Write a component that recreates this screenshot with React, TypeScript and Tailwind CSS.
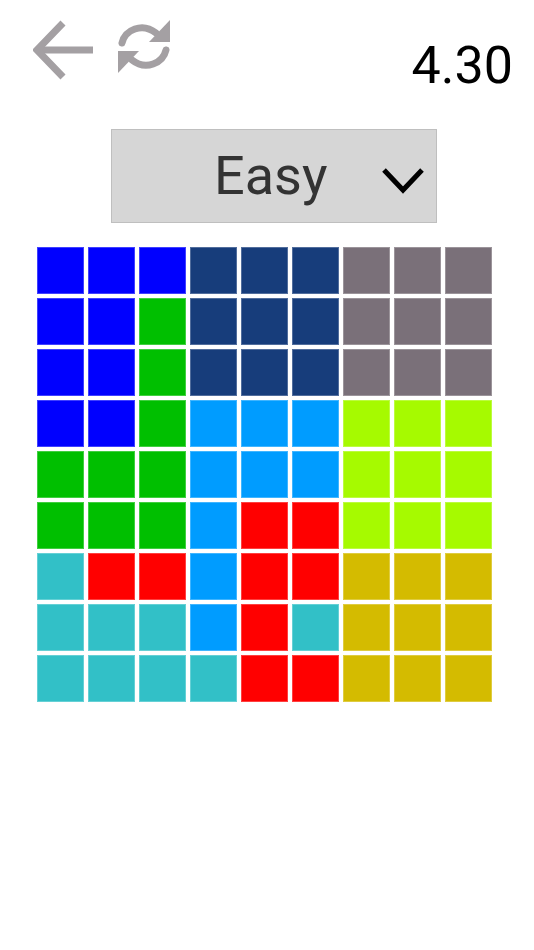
import React from 'react'

const colors: Record<string, string> = {
  B: 'bg-[#0000ff]',
  N: 'bg-[#173d7b]',
  G: 'bg-[#7a7079]',
  E: 'bg-[#00bf00]',
  L: 'bg-[#009cff]',
  Y: 'bg-[#a6fa00]',
  R: 'bg-[#ff0000]',
  C: 'bg-[#32c0c7]',
  O: 'bg-[#d4bb00]',
}

// board layout, one string per row
const board = [
  'BBBNNNGGG',
  'BBENNNGGG',
  'BBENNNGGG',
  'BBELLLYYY',
  'EEELLLYYY',
  'EEELRRYYY',
  'CRRLRROOO',
  'CCCLRCOOO',
  'CCCCRROOO',
]

const BackArrow = () => (
  <svg viewBox="0 0 60 62" className="w-[60px] h-[62px]" fill="none" stroke="#a4a0a3" strokeWidth="7">
    <path d="M60 31 H5" />
    <path d="M30 4 L4 31 L30 58" strokeLinejoin="miter" />
  </svg>
)

const RefreshIcon = () => (
  <svg viewBox="0 0 52 53" className="w-[52px] h-[53px]" fill="#a4a0a3">
    <path d="M4 23 C7 10 24 2 38 13" fill="none" stroke="#a4a0a3" strokeWidth="7" strokeLinecap="round" />
    <path d="M52 0 L52 22 L31 22 Z" />
    <path d="M48 30 C45 43 28 51 14 40" fill="none" stroke="#a4a0a3" strokeWidth="7" strokeLinecap="round" />
    <path d="M0 53 L0 31 L21 31 Z" />
  </svg>
)

export default function App() {
  return (
    <div className="w-full min-h-[950px] bg-white" style={{ fontFamily: 'Roboto, "Liberation Sans", sans-serif' }}>
      {/* top bar */}
      <div className="h-[129px] flex items-start pt-[19px] pl-[33px] pr-[21px]">
        <BackArrow />
        <div className="ml-[25px] mt-[1px]">
          <RefreshIcon />
        </div>
        <div className="flex-1" />
        <div className="mt-[21px] text-[52px] leading-none text-black">4.30</div>
      </div>

      {/* difficulty select */}
      <div className="ml-[111px] w-[326px] h-[94px] bg-[#d6d6d6] border border-[#bfbfbf] flex items-center relative">
        <span className="ml-[102px] text-[54px] leading-none text-[#333333]">Easy</span>
        <svg viewBox="0 0 42 26" className="absolute left-[270px] top-[38px] w-[42px] h-[26px]" fill="none" stroke="#000" strokeWidth="5">
          <path d="M2 2 L21 22 L40 2" />
        </svg>
      </div>

      {/* board */}
      <div className="ml-[37px] mt-[24px] grid grid-cols-[repeat(9,47px)] gap-[4px]">
        {board.map((row, r) =>
          row.split('').map((c, i) => (
            <div key={`${r}-${i}`} className={`w-[47px] h-[47px] border border-white/25 ${colors[c]}`} />
          ))
        )}
      </div>
    </div>
  )
}
